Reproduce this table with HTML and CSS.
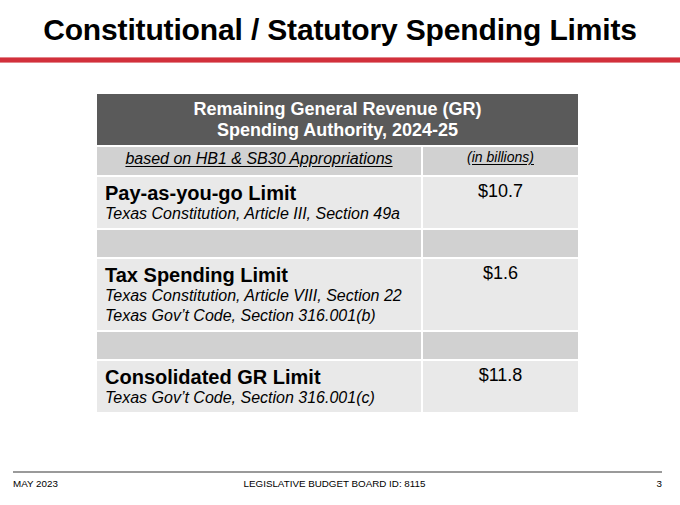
FILE: index.html
```html
<!DOCTYPE html>
<html lang="en">
<head>
<meta charset="utf-8">
<title>Constitutional / Statutory Spending Limits</title>
<link rel="stylesheet" href="styles.css">
</head>
<body>
<div class="slide">
  <h1 class="title">Constitutional / Statutory Spending Limits</h1>
  <div class="rule"></div>

  <div class="limits">
    <div class="cell head">Remaining General Revenue (GR)<br>Spending Authority, 2024-25</div>

    <div class="cell shade sub-left"><span class="ul">based on HB1 &amp; SB30 Appropriations</span></div>
    <div class="cell shade sub-right"><span class="ul">(in billions)</span></div>

    <div class="cell light item">
      <div class="item-name">Pay-as-you-go Limit</div>
      <div class="item-src">Texas Constitution, Article III, Section 49a</div>
    </div>
    <div class="cell light amount">$10.7</div>

    <div class="cell shade"></div>
    <div class="cell shade"></div>

    <div class="cell light item">
      <div class="item-name">Tax Spending Limit</div>
      <div class="item-src">Texas Constitution, Article VIII, Section 22</div>
      <div class="item-src">Texas Gov’t Code, Section 316.001(b)</div>
    </div>
    <div class="cell light amount">$1.6</div>

    <div class="cell shade"></div>
    <div class="cell shade"></div>

    <div class="cell light item">
      <div class="item-name">Consolidated GR Limit</div>
      <div class="item-src">Texas Gov’t Code, Section 316.001(c)</div>
    </div>
    <div class="cell light amount">$11.8</div>
  </div>

  <footer class="footer">
    <span class="foot-left">MAY 2023</span>
    <span class="foot-mid">LEGISLATIVE BUDGET BOARD ID: 8115</span>
    <span class="foot-right">3</span>
  </footer>
</div>
</body>
</html>
```

FILE: styles.css
```css
html, body {
  margin: 0;
  padding: 0;
  background: #ffffff;
}

body {
  font-family: "Liberation Sans", Arial, sans-serif;
  color: #000000;
}

.slide {
  width: 680px;
  height: 505px;
  overflow: hidden;
  display: flex;
  flex-direction: column;
}

.title {
  margin: 0;
  padding-top: 13px;
  height: 45px;
  box-sizing: border-box;
  font-size: 30px;
  line-height: 34px;
  font-weight: 700;
  letter-spacing: -0.15px;
  text-align: center;
  color: #000000;
}

.rule {
  height: 4px;
  background: #d2303b;
  border-top: 1px solid #e3868c;
  border-bottom: 1px solid #e3868c;
  margin-top: 12px;
}

.limits {
  margin: 31px 0 0 97px;
  width: 481px;
  display: grid;
  grid-template-columns: 324px 155px;
  grid-template-rows: 51px 28px 51px 27px 71px 27px 51px;
  column-gap: 2px;
  row-gap: 2px;
}

.cell {
  box-sizing: border-box;
}

.head {
  grid-column: 1 / -1;
  background: #5a5a5a;
  color: #ffffff;
  font-weight: 700;
  font-size: 18px;
  line-height: 21px;
  text-align: center;
  padding-top: 5px;
}

.shade {
  background: #d1d1d1;
}

.light {
  background: #e9e9e9;
}

.ul {
  text-decoration: underline;
  text-underline-offset: 2px;
}

.sub-left {
  font-style: italic;
  font-size: 16px;
  line-height: 18px;
  text-align: center;
  padding-top: 3px;
}

.sub-right {
  font-style: italic;
  font-size: 14px;
  line-height: 16px;
  text-align: center;
  padding-top: 2px;
}

.item {
  padding: 5px 0 0 8px;
}

.item-name {
  font-weight: 700;
  font-size: 20px;
  line-height: 22px;
}

.item-src {
  font-style: italic;
  font-size: 16px;
  line-height: 19.5px;
}

.amount {
  font-size: 18px;
  line-height: 21px;
  text-align: center;
  padding-top: 4px;
}

.footer {
  margin: 59px 18px 0 13px;
  border-top: 2px solid #9a9a9a;
  padding-top: 5px;
  display: grid;
  grid-template-columns: 1fr auto 1fr;
  font-size: 9.8px;
  line-height: 11px;
  color: #000000;
}

.foot-mid {
  margin-right: 6px;
}

.foot-right {
  text-align: right;
}
```
